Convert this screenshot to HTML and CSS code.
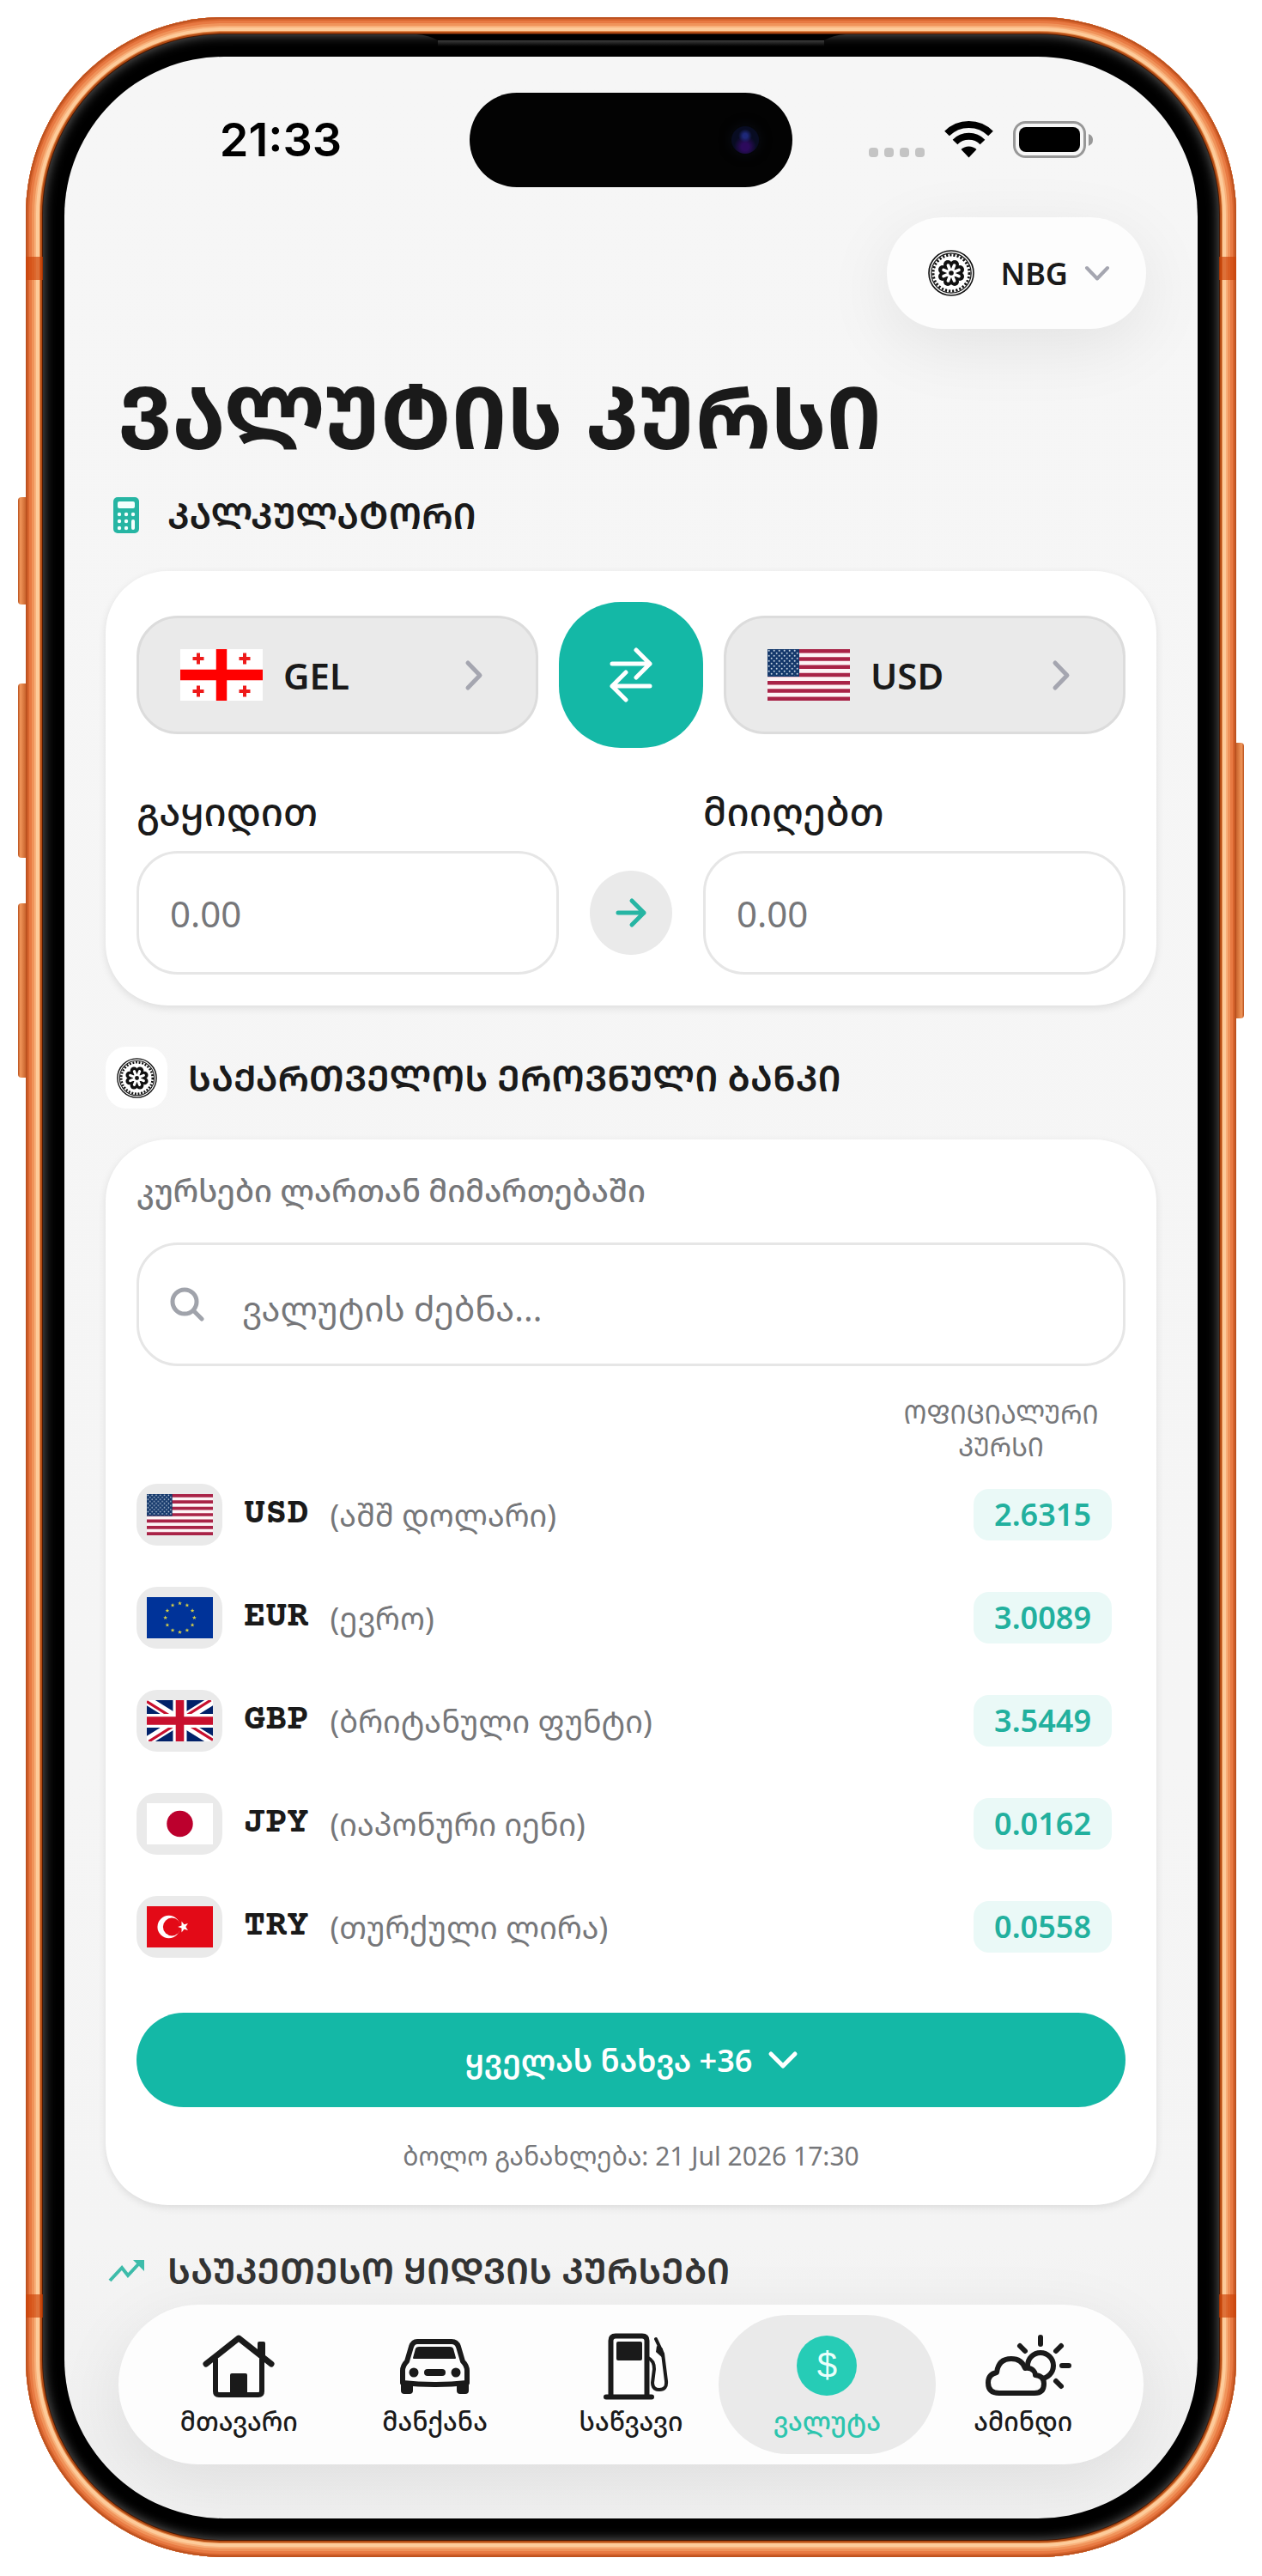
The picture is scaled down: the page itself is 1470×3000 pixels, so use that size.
FILE: index.html
```
<!DOCTYPE html>
<html lang="ka">
<head>
<meta charset="utf-8">
<meta name="viewport" content="width=device-width, initial-scale=1">
<title>ვალუტის კურსი</title>
<link rel="stylesheet" href="styles.css">
</head>
<body>
<svg class="sprite" width="0" height="0" aria-hidden="true">
  <symbol id="seal" viewBox="0 0 54 54">
    <circle cx="27" cy="27" r="26" fill="#fff" stroke="#111" stroke-width="1.6"/>
    <circle cx="27" cy="27" r="23.2" fill="none" stroke="#111" stroke-width="1.2"/>
    <circle cx="27" cy="27" r="21" fill="none" stroke="#111" stroke-width="3" stroke-dasharray="2.2 2"/>
    <g fill="#111">
      <circle cx="27" cy="27" r="11"/>
      <circle cx="31" cy="17" r="5"/><circle cx="37" cy="23" r="5"/><circle cx="37" cy="31" r="5"/><circle cx="31" cy="37" r="5"/>
      <circle cx="23" cy="37" r="5"/><circle cx="17" cy="31" r="5"/><circle cx="17" cy="23" r="5"/><circle cx="23" cy="17" r="5"/>
    </g>
    <g stroke="#fff" stroke-width="3.6" stroke-linecap="round">
      <path d="M27 27 30.600 18M27 27 36 23.400M27 27 36 30.600M27 27 30.600 36M27 27 23.400 36M27 27 18 30.600M27 27 18 23.400M27 27 23.400 18"/>
    </g>
    <circle cx="27" cy="27" r="5" fill="#fff"/>
    <circle cx="27" cy="27" r="2.800" fill="#111"/>
  </symbol>
  <symbol id="flag-us" viewBox="0 0 96 60" preserveAspectRatio="none">
    <pattern id="stars" width="6" height="6" patternUnits="userSpaceOnUse">
      <circle cx="1.700" cy="1.700" r="1" fill="#c5d3e2"/><circle cx="4.700" cy="4.700" r="1" fill="#c5d3e2"/>
    </pattern>
    <rect width="96" height="60" fill="#fdf3f5"/>
    <path d="M0 2.300H96M0 11.500H96M0 20.800H96M0 30H96M0 39.200H96M0 48.500H96M0 57.700H96" stroke="#a92347" stroke-width="4.600"/>
    <rect width="37" height="32" fill="#14386b"/>
    <rect width="36" height="31" fill="url(#stars)"/>
  </symbol>
  <symbol id="flag-ge" viewBox="0 0 96 60" preserveAspectRatio="none">
    <rect width="96" height="60" fill="#fff"/>
    <path d="M48 0V60M0 30H96" stroke="#f00" stroke-width="12.500"/>
    <path d="M21 4.500v13M14.500 11h13M75 4.500v13M68.500 11h13M21 42.500v13M14.500 49h13M75 42.500v13M68.500 49h13" stroke="#ee1a1a" stroke-width="4"/>
  </symbol>
  <symbol id="flag-eu" viewBox="0 0 96 60" preserveAspectRatio="none">
    <rect width="96" height="60" fill="#003399"/>
    <defs><path id="star" d="M0-3 .9-.9 3-.9 1.300.5 1.900 2.600 0 1.300-1.900 2.600-1.300.5-3-.9-.9-.9z" fill="#d6cf45"/></defs>
    <use href="#star" x="48" y="9"/><use href="#star" x="58.500" y="11.800"/><use href="#star" x="66.200" y="19.500"/><use href="#star" x="69" y="30"/>
    <use href="#star" x="66.200" y="40.500"/><use href="#star" x="58.500" y="48.200"/><use href="#star" x="48" y="51"/><use href="#star" x="37.500" y="48.200"/>
    <use href="#star" x="29.800" y="40.500"/><use href="#star" x="27" y="30"/><use href="#star" x="29.800" y="19.500"/><use href="#star" x="37.500" y="11.800"/>
  </symbol>
  <symbol id="flag-gb" viewBox="0 0 96 60" preserveAspectRatio="none">
    <rect width="96" height="60" fill="#012169"/>
    <path d="M0 0 96 60M96 0 0 60" stroke="#fff" stroke-width="13"/>
    <path d="M0 2 40 27M56 33 96 58M93 0 54 24.500M42 35.500 3 60" stroke="#c8102e" stroke-width="4"/>
    <path d="M48 0V60M0 30H96" stroke="#fff" stroke-width="20"/>
    <path d="M48 0V60M0 30H96" stroke="#c8102e" stroke-width="12"/>
  </symbol>
  <symbol id="flag-jp" viewBox="0 0 96 60" preserveAspectRatio="none">
    <rect width="96" height="60" fill="#fff"/><circle cx="48" cy="30" r="19" fill="#bc002d"/>
  </symbol>
  <symbol id="flag-tr" viewBox="0 0 96 60" preserveAspectRatio="none">
    <rect width="96" height="60" fill="#e30a17"/>
    <circle cx="32" cy="30" r="16.500" fill="#fff"/><circle cx="36.500" cy="30" r="13" fill="#e30a17"/>
    <path d="M45 30 50.500 28 50.500 22 54.200 26.700 59.800 25 56.500 30 59.800 35 54.200 33.300 50.500 38 50.500 32z" fill="#fff"/>
  </symbol>
</svg>

<div class="phone">
  <span class="key key-action"></span><span class="key key-up"></span><span class="key key-down"></span><span class="key key-power"></span>
  <span class="band band-tl"></span><span class="band band-tr"></span><span class="band band-bl"></span><span class="band band-br"></span>
  <div class="bezel">
    <svg class="speaker" viewBox="0 0 500 14" preserveAspectRatio="none" aria-hidden="true">
      <defs><linearGradient id="lip" x1="0" y1="0" x2="0" y2="1"><stop offset="0" stop-color="#3c3c3c"/><stop offset="1" stop-color="#000"/></linearGradient></defs>
      <path d="M0 0H500Q485 1 475 7H25Q15 1 0 0Z" fill="#000"/><rect x="25" y="7" width="450" height="7" fill="url(#lip)"/>
    </svg>
    <div class="screen">
      <div class="status">
        <time class="clock">21:33</time>
        <div class="island"><span class="lens"></span></div>
        <svg class="signals" viewBox="0 0 262 44" aria-label="სიგნალი">
          <g fill="#c4c4c4"><rect x="0" y="31" width="11" height="11" rx="4"/><rect x="18" y="31" width="11" height="11" rx="4"/><rect x="36" y="31" width="11" height="11" rx="4"/><rect x="54" y="31" width="11" height="11" rx="4"/></g>
          <g fill="none" stroke="#000" stroke-width="8"><path d="M91 14.500A36 36 0 0 1 142 14.500"/><path d="M100.500 24.500A22.500 22.500 0 0 1 132.500 24.500"/></g>
          <path d="M107.500 33A13 13 0 0 1 125.500 33L116.500 42.500Z"/>
          <rect x="169.500" y="1.500" width="82" height="40" rx="13" fill="none" stroke="#989898" stroke-width="3"/>
          <rect x="175" y="7" width="71" height="29" rx="8"/>
          <path d="M256 15q5 2 5 7t-5 7z" fill="#989898"/>
        </svg>
      </div>

      <header class="top">
        <button class="bank" type="button">
          <svg class="seal-lg" aria-hidden="true"><use href="#seal"/></svg>
          <span>NBG</span>
          <svg class="bank-chev" viewBox="0 0 28 17" aria-hidden="true"><path d="M2 2 14 14.500 26 2"/></svg>
        </button>
      </header>

      <main class="content">
        <h1>ᲕᲐᲚᲣᲢᲘᲡ ᲙᲣᲠᲡᲘ</h1>

        <h2 class="section calc-title">
          <svg class="ico" viewBox="0 0 44 44" aria-hidden="true">
            <rect x="7" y="1" width="30" height="42" rx="5" fill="#26b5a3"/>
            <rect x="12" y="6" width="20" height="8" rx="2" fill="#f5fffd"/>
            <g fill="#f5fffd"><circle cx="14" cy="21" r="2.200"/><circle cx="22" cy="21" r="2.200"/><circle cx="30" cy="21" r="2.200"/><circle cx="14" cy="29" r="2.200"/><circle cx="22" cy="29" r="2.200"/><circle cx="14" cy="37" r="2.200"/><circle cx="22" cy="37" r="2.200"/><rect x="28" y="27" width="4" height="12" rx="2"/></g>
          </svg>
          ᲙᲐᲚᲙᲣᲚᲐᲢᲝᲠᲘ
        </h2>
        <section class="card calc">
          <div class="pair">
            <button class="pick" type="button">
              <svg class="flag" aria-hidden="true"><use href="#flag-ge"/></svg><span>GEL</span>
              <svg class="go" viewBox="0 0 20 33" aria-hidden="true"><path d="M3 2 17 16.500 3 31"/></svg>
            </button>
            <button class="swap" type="button" aria-label="გაცვლა">
              <svg viewBox="0 0 50 64" aria-hidden="true"><path d="M3 19H47M31 3 47 19 31 35M47 45H3M19 29 3 45 19 61"/></svg>
            </button>
            <button class="pick" type="button">
              <svg class="flag" aria-hidden="true"><use href="#flag-us"/></svg><span>USD</span>
              <svg class="go" viewBox="0 0 20 33" aria-hidden="true"><path d="M3 2 17 16.500 3 31"/></svg>
            </button>
          </div>
          <div class="amounts">
            <div class="field"><label for="sell">გაყიდით</label><input id="sell" type="text" placeholder="0.00"></div>
            <div class="arrow"><svg viewBox="0 0 34 32" aria-hidden="true"><path d="M2 16H32M18 2 32 16 18 30"/></svg></div>
            <div class="field"><label for="get">მიიღებთ</label><input id="get" type="text" placeholder="0.00"></div>
          </div>
        </section>

        <h2 class="section bank-title">
          <span class="tile"><svg aria-hidden="true"><use href="#seal"/></svg></span>
          ᲡᲐᲥᲐᲠᲗᲕᲔᲚᲝᲡ ᲔᲠᲝᲕᲜᲣᲚᲘ ᲑᲐᲜᲙᲘ
        </h2>
        <section class="card rates">
          <p class="sub">კურსები ლართან მიმართებაში</p>
          <div class="search">
            <svg viewBox="0 0 40 40" aria-hidden="true"><circle cx="17" cy="17" r="14"/><path d="M27.500 27.500 37 37"/></svg>
            <input type="search" aria-label="ვალუტის ძებნა" placeholder="ვალუტის ძებნა...">
          </div>
          <table>
            <thead><tr><td></td><th scope="col">ᲝᲤᲘᲪᲘᲐᲚᲣᲠᲘ ᲙᲣᲠᲡᲘ</th></tr></thead>
            <tbody>
              <tr><td><div class="cur"><span class="chip"><svg aria-hidden="true"><use href="#flag-us"/></svg></span><b>USD</b><span>(აშშ დოლარი)</span></div></td><td class="rate"><span>2.6315</span></td></tr>
              <tr><td><div class="cur"><span class="chip"><svg aria-hidden="true"><use href="#flag-eu"/></svg></span><b>EUR</b><span>(ევრო)</span></div></td><td class="rate"><span>3.0089</span></td></tr>
              <tr><td><div class="cur"><span class="chip"><svg aria-hidden="true"><use href="#flag-gb"/></svg></span><b>GBP</b><span>(ბრიტანული ფუნტი)</span></div></td><td class="rate"><span>3.5449</span></td></tr>
              <tr><td><div class="cur"><span class="chip"><svg aria-hidden="true"><use href="#flag-jp"/></svg></span><b>JPY</b><span>(იაპონური იენი)</span></div></td><td class="rate"><span>0.0162</span></td></tr>
              <tr><td><div class="cur"><span class="chip"><svg aria-hidden="true"><use href="#flag-tr"/></svg></span><b>TRY</b><span>(თურქული ლირა)</span></div></td><td class="rate"><span>0.0558</span></td></tr>
            </tbody>
          </table>
          <button class="more" type="button">ყველას ნახვა +36
            <svg viewBox="0 0 32 19" aria-hidden="true"><path d="M2 2 16 16 30 2"/></svg>
          </button>
          <p class="updated">ბოლო განახლება: 21 Jul 2026 17:30</p>
        </section>

        <h2 class="section best-title">
          <svg class="ico" viewBox="0 0 44 44" aria-hidden="true"><path d="M3 34 17 19 24 28 37 14" fill="none" stroke="#3dbcaa" stroke-width="4"/><path d="M30 10H43V23Z" fill="#3dbcaa"/></svg>
          ᲡᲐᲣᲙᲔᲗᲔᲡᲝ ᲧᲘᲓᲕᲘᲡ ᲙᲣᲠᲡᲔᲑᲘ
        </h2>
      </main>

      <nav class="tabs">
        <a class="tab" href="#home">
          <svg viewBox="0 0 104 80" aria-hidden="true"><g class="ln"><path d="M14 38 52 8 90 38" stroke-width="7"/><path d="M25 33V70Q25 74 29 74H75Q79 74 79 70V33"/></g><path d="M74 14q0-2 2-2h5q2 0 2 2v22l-9-7z"/><rect x="42" y="49" width="20" height="26" rx="2"/></svg>
          <span>მთავარი</span>
        </a>
        <a class="tab" href="#car">
          <svg viewBox="0 0 104 80" aria-hidden="true"><path class="ln" d="M31 12H71Q77 12 79 18L84 35Q89 40 89 46V60Q70 62 51 62 32 62 14 60V46Q14 40 19 35L24 18Q26 12 31 12Z"/><path d="M29 20Q30 18 33 18H69Q72 18 73 20L76 31Q76 32 75 32H27Q26 32 26 31Z"/><circle cx="27" cy="48" r="5.500"/><circle cx="76" cy="48" r="5.500"/><rect x="39" y="44" width="25" height="8" rx="4"/><rect x="12" y="58" width="14" height="15" rx="4"/><rect x="77" y="58" width="14" height="15" rx="4"/></svg>
          <span>მანქანა</span>
        </a>
        <a class="tab" href="#fuel">
          <svg viewBox="0 0 104 80" aria-hidden="true"><g class="ln"><path d="M28.500 75V11Q28.500 5.500 34 5.500H65Q70.500 5.500 70.500 11V75"/><path d="M23 76.500H76" stroke-width="6"/><path d="M72 31Q79 34 79 44L77 60Q77 68 85 68 94 68 93 58L89 26 81 9" stroke-width="4"/></g><rect x="35" y="12" width="30" height="22" rx="2"/><path d="M82 17 81 24 90 32 89 20Z"/></svg>
          <span>საწვავი</span>
        </a>
        <a class="tab active" href="#currency" aria-current="page">
          <i class="coin">$</i>
          <span>ვალუტა</span>
        </a>
        <a class="tab" href="#weather">
          <svg viewBox="0 0 104 80" aria-hidden="true"><g class="ln"><circle cx="72" cy="40" r="15"/><path d="M72 7v8M48 17l6 6M96 17l-6 6M97 40h8M90 58l6 6"/><path d="M24 72Q11 72 11 60 11 50 21 48 23 32 38 32 50 32 54 43 60 42 64 46 66 48 66 51 76 52 76 61 76 72 65 72Z" fill="#fdfdfd"/></g></svg>
          <span>ამინდი</span>
        </a>
      </nav>
    </div>
  </div>
</div>
</body>
</html>
```
FILE: styles.css
```
* { box-sizing: border-box; }
body {
  margin: 0;
  padding: 20px 30px 21px;
  background: #fff;
  color: #1a1a1a;
  font-family: "Noto Sans", "Noto Sans Georgian", sans-serif;
}
button, input { font: inherit; color: inherit; margin: 0; }
svg { display: block; flex: none; overflow: visible; }
.sprite { position: absolute; }
p, h1, h2 { margin: 0; }

/* phone shell */
.phone {
  position: relative;
  padding: 20px;
  border-radius: 230px;
  background: #4a1a04;
  box-shadow:
    inset 0 0 0 2px #bd5220, inset 0 0 0 4px #d8652e, inset 0 0 0 7px #e87a43,
    inset 0 0 0 10px #f0935a, inset 0 0 0 12px #f8b07a, inset 0 0 0 16px #fdcb9a,
    inset 0 0 0 17px #e58b4c, inset 0 0 0 19px #b34c14;
}
.key {
  position: absolute;
  left: -9px;
  width: 9px;
  border-radius: 4px 0 0 4px;
  background: linear-gradient(90deg, #b9501c, #f0965a 30%, #c9632c);
}
.key-action { top: 559px; height: 125px; }
.key-up { top: 776px; height: 203px; }
.key-down { top: 1032px; height: 203px; }
.key-power { top: 845px; height: 321px; left: auto; right: -9px; transform: scaleX(-1); }
.band { position: absolute; width: 20px; height: 27px; background: rgba(205, 65, 5, .65); }
.band-tl { left: 0; top: 279px; }
.band-tr { right: 0; top: 279px; }
.band-bl { left: 0; bottom: 279px; }
.band-br { right: 0; bottom: 279px; }
.bezel {
  position: relative;
  padding: 26px 25px 25px;
  border-radius: 210px;
  background: #000;
  box-shadow: inset 0 0 14px rgba(150, 150, 150, .7);
}
.speaker { position: absolute; top: 0; left: 50%; width: 500px; height: 14px; margin-left: -250px; }
.screen {
  padding: 42px 48px 63px;
  border-radius: 186px;
  background: linear-gradient(to top, #f1f1f1, #f0f0f0 90px, #f4f4f4 320px, #f5f5f5 900px, #f6f6f6);
}

/* status bar */
.status { display: grid; grid-template-columns: 1fr 376px 1fr; align-items: center; }
.clock { justify-self: center; padding-right: 16px; font: 600 54px/60px Inter, sans-serif; color: #000; }
.island { display: flex; align-items: center; justify-content: flex-end; height: 110px; padding-right: 39px; border-radius: 55px; background: #030303; }
.lens { width: 32px; height: 32px; border-radius: 50%; background: radial-gradient(circle at 50% 35%, #1e2878 0 10%, transparent 30%), radial-gradient(circle at 50% 75%, #2c0a5c 0 15%, transparent 45%), #080c22; box-shadow: 0 0 14px #0a0d16; }
.signals { width: 262px; height: 44px; justify-self: center; margin-left: 16px; }

.top { display: flex; justify-content: flex-end; padding: 35px 12px 0 0; }
.bank {
  display: flex; align-items: center; height: 130px; padding: 0 43px 0 48px;
  border: 0; border-radius: 65px; background: #fdfdfd;
  box-shadow: 0 20px 80px rgba(0, 0, 0, .08);
  font-size: 36px; font-weight: 600;
}
.seal-lg { width: 54px; height: 54px; margin-right: 31px; }
.bank-chev { width: 28px; height: 17px; margin-left: 20px; fill: none; stroke: #a5a6b0; stroke-width: 4; stroke-linecap: round; stroke-linejoin: round; }

/* headings */
h1 { padding: 41px 14px 0; font-size: 100px; font-weight: 700; line-height: 120px; }
.section { display: flex; align-items: center; gap: 26px; min-height: 48px; font-size: 42px; font-weight: 600; line-height: 48px; }
.ico { width: 44px; height: 44px; margin-left: 2px; }
.calc-title { margin: 32px 0 41px; }
.bank-title { margin: 48px 0 36px; gap: 24px; }
.best-title { margin: 52px 0 16px; color: #333; }
.tile { display: grid; place-items: center; width: 72px; height: 72px; border-radius: 24px; background: #fff; }
.tile svg { width: 47px; height: 47px; }

.card { padding: 36px; border-radius: 72px; background: #fff; box-shadow: 0 3px 10px rgba(0, 0, 0, .1); }

/* calculator */
.pair { display: grid; grid-template-columns: 1fr 168px 1fr; gap: 24px; align-items: center; }
.pick {
  display: flex; align-items: center; gap: 24px; height: 138px; padding: 0 62px 0 48px;
  border: 3px solid #dcdcdc; border-radius: 48px; background: #eaeaea;
  font-size: 42px; font-weight: 600;
}
.flag { width: 96px; height: 60px; }
.go { width: 20px; height: 33px; margin-left: auto; fill: none; stroke: #a5a6b0; stroke-width: 5; stroke-linecap: round; stroke-linejoin: round; }
.swap { display: grid; place-items: center; height: 170px; padding: 0; border: 0; border-radius: 72px; background: #14b8a6; }
.swap svg { width: 50px; height: 64px; fill: none; stroke: #fff; stroke-width: 5; stroke-linecap: round; stroke-linejoin: round; }
.amounts { display: grid; grid-template-columns: 1fr 96px 1fr; gap: 36px; align-items: end; margin-top: 44px; }
.field { display: grid; gap: 16px; }
.field label { font-size: 45px; font-weight: 500; line-height: 60px; }
.field input { width: 100%; height: 144px; padding: 0 36px; border: 3px solid #e6e6e6; border-radius: 48px; background: #fff; font-size: 42px; }
::placeholder { color: #76777a; opacity: 1; }
.arrow { display: grid; place-items: center; width: 96px; height: 98px; margin-bottom: 23px; border-radius: 50%; background: #eaeaea; }
.arrow svg { width: 34px; height: 32px; fill: none; stroke: #26b5a3; stroke-width: 5; stroke-linecap: round; stroke-linejoin: round; }

/* rates */
.sub { color: #76777a; font-size: 36px; font-weight: 500; line-height: 48px; }
.search { display: flex; align-items: center; gap: 44px; height: 144px; margin-top: 36px; padding: 0 36px; border: 3px solid #e6e6e6; border-radius: 48px; }
.search svg { width: 40px; height: 40px; fill: none; stroke: #a0a3ab; stroke-width: 5; stroke-linecap: round; }
.search input { flex: 1; min-width: 0; height: 66px; padding: 8px 0 0; border: 0; outline: 0; background: none; font-size: 40px; appearance: none; }
table { width: 100%; border-collapse: collapse; }
td { padding: 0; }
th { width: 290px; padding: 37px 29px 0; color: #76777a; font-size: 30px; font-weight: 400; line-height: 38px; }
tbody tr { height: 120px; }
.cur { display: flex; align-items: center; gap: 25px; color: #76777a; font-size: 36px; }
.cur b { color: #1a1a1a; font: 700 42px/48px "Courier Prime", Courier, "Liberation Mono", monospace; }
.chip { display: grid; place-items: center; width: 100px; height: 72px; border-radius: 24px; background: #eaeaea; }
.chip svg { width: 77px; height: 48px; }
.rate { padding-right: 16px; text-align: right; }
.rate span { display: inline-block; padding: 0 24px; border-radius: 18px; background: #eaf9f7; color: #22b09e; font-size: 36px; font-weight: 600; line-height: 60px; }
.more {
  display: flex; align-items: center; justify-content: center; gap: 20px; width: 100%; height: 110px; margin-top: 40px;
  border: 0; border-radius: 55px; background: #14b8a6; color: #fff; font-size: 36px; font-weight: 600;
}
.more svg { width: 32px; height: 19px; fill: none; stroke: #fff; stroke-width: 5; stroke-linecap: round; stroke-linejoin: round; }
.updated { margin-top: 36px; color: #76777a; font-size: 30px; line-height: 42px; text-align: center; }

/* tab bar */
.tabs {
  display: grid; grid-template-columns: repeat(5, 1fr); margin: 0 15px; padding: 12px 26px;
  border-radius: 93px; background: #fdfdfd; box-shadow: 0 20px 80px rgba(0, 0, 0, .08);
}
.tab { display: flex; flex-direction: column; align-items: center; gap: 6px; padding: 19px 0; color: #1a1a1a; text-decoration: none; font-size: 30px; font-weight: 500; line-height: 38px; }
.tab svg { width: 104px; height: 80px; fill: #1a1a1a; }
.ln { fill: none; stroke: #1a1a1a; stroke-width: 6; stroke-linecap: round; stroke-linejoin: round; }
.active { margin: 0 -12px; border-radius: 81px; background: #eaeaea; color: #2cc5ae; }
.coin { display: grid; place-items: center; width: 70px; height: 70px; margin: 5px 0; border-radius: 50%; background: #26ccb6; color: #eafffb; font: 400 42px/70px "Liberation Sans", sans-serif; }
```
